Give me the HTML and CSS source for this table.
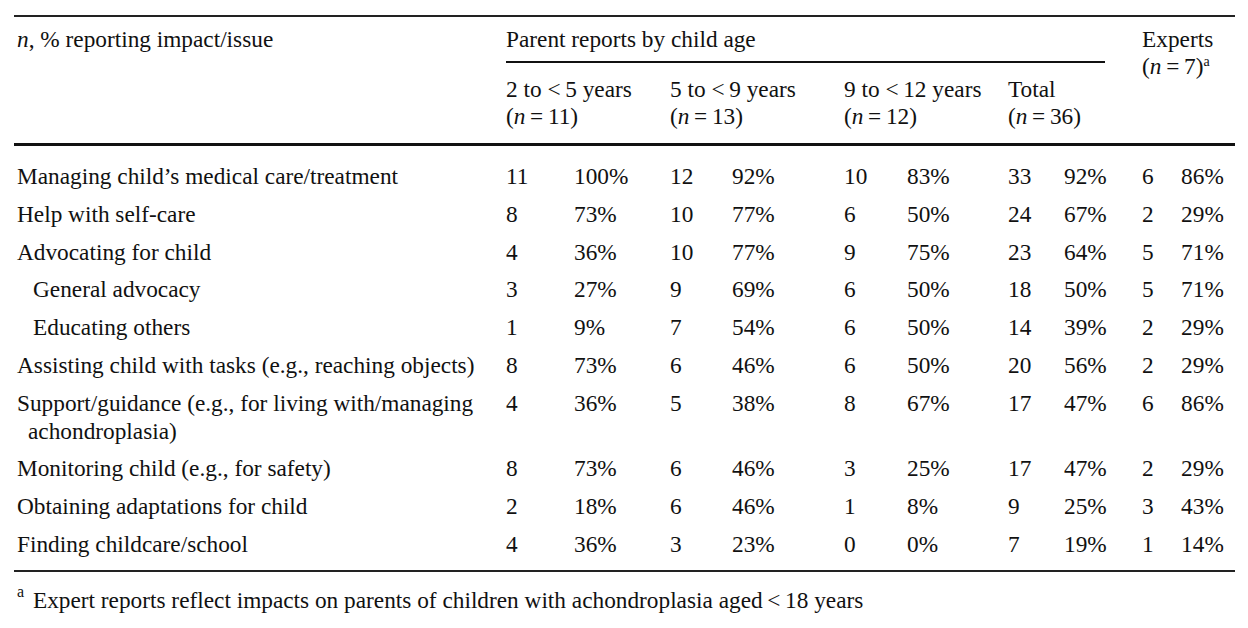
FILE: index.html
```html
<!DOCTYPE html>
<html lang="en">
<head>
<meta charset="utf-8">
<title>Table</title>
<link rel="stylesheet" href="styles.css">
</head>
<body>
<div class="page">
<table class="tbl">
  <colgroup>
    <col class="c-label">
    <col class="c-n1"><col class="c-p1">
    <col class="c-n2"><col class="c-p2">
    <col class="c-n3"><col class="c-p3">
    <col class="c-n4"><col class="c-p4">
    <col class="c-n5"><col class="c-p5">
  </colgroup>
  <thead>
    <tr class="h1">
      <th rowspan="2" class="lab"><i>n</i>, % reporting impact/issue</th>
      <th colspan="8" class="span"><div class="spanner">Parent reports by child age</div></th>
      <th colspan="2" rowspan="2" class="exp">Experts<br>(<i>n</i>&thinsp;=&thinsp;7)<sup>a</sup></th>
    </tr>
    <tr class="h2">
      <th colspan="2">2 to &lt;&thinsp;5 years<br>(<i>n</i>&thinsp;=&thinsp;11)</th>
      <th colspan="2">5 to &lt;&thinsp;9 years<br>(<i>n</i>&thinsp;=&thinsp;13)</th>
      <th colspan="2">9 to &lt;&thinsp;12 years<br>(<i>n</i>&thinsp;=&thinsp;12)</th>
      <th colspan="2">Total<br>(<i>n</i>&thinsp;=&thinsp;36)</th>
    </tr>
  </thead>
  <tbody>
    <tr class="first"><td class="lab">Managing child’s medical care/treatment</td><td>11</td><td>100%</td><td>12</td><td>92%</td><td>10</td><td>83%</td><td>33</td><td>92%</td><td>6</td><td>86%</td></tr>
    <tr><td class="lab">Help with self-care</td><td>8</td><td>73%</td><td>10</td><td>77%</td><td>6</td><td>50%</td><td>24</td><td>67%</td><td>2</td><td>29%</td></tr>
    <tr><td class="lab">Advocating for child</td><td>4</td><td>36%</td><td>10</td><td>77%</td><td>9</td><td>75%</td><td>23</td><td>64%</td><td>5</td><td>71%</td></tr>
    <tr><td class="lab sub">General advocacy</td><td>3</td><td>27%</td><td>9</td><td>69%</td><td>6</td><td>50%</td><td>18</td><td>50%</td><td>5</td><td>71%</td></tr>
    <tr><td class="lab sub">Educating others</td><td>1</td><td>9%</td><td>7</td><td>54%</td><td>6</td><td>50%</td><td>14</td><td>39%</td><td>2</td><td>29%</td></tr>
    <tr><td class="lab">Assisting child with tasks (e.g., reaching objects)</td><td>8</td><td>73%</td><td>6</td><td>46%</td><td>6</td><td>50%</td><td>20</td><td>56%</td><td>2</td><td>29%</td></tr>
    <tr><td class="lab hang">Support/guidance (e.g., for living with/managing achondroplasia)</td><td>4</td><td>36%</td><td>5</td><td>38%</td><td>8</td><td>67%</td><td>17</td><td>47%</td><td>6</td><td>86%</td></tr>
    <tr><td class="lab">Monitoring child (e.g., for safety)</td><td>8</td><td>73%</td><td>6</td><td>46%</td><td>3</td><td>25%</td><td>17</td><td>47%</td><td>2</td><td>29%</td></tr>
    <tr><td class="lab">Obtaining adaptations for child</td><td>2</td><td>18%</td><td>6</td><td>46%</td><td>1</td><td>8%</td><td>9</td><td>25%</td><td>3</td><td>43%</td></tr>
    <tr class="last"><td class="lab">Finding childcare/school</td><td>4</td><td>36%</td><td>3</td><td>23%</td><td>0</td><td>0%</td><td>7</td><td>19%</td><td>1</td><td>14%</td></tr>
  </tbody>
</table>
<p class="note"><sup>a</sup> Expert reports reflect impacts on parents of children with achondroplasia aged&thinsp;&lt;&thinsp;18 years</p>
</div>
</body>
</html>
```
FILE: styles.css
```css
html, body {
  margin: 0;
  padding: 0;
  background: #fff;
}
body {
  font-family: "Liberation Serif", "Times New Roman", serif;
  color: #111;
  font-size: 23.3px;
}
.page {
  padding: 15px 13px 0 14px;
}
.tbl {
  border-collapse: collapse;
  table-layout: fixed;
  width: 1221px;
  border-top: 2px solid #222;
  border-bottom: 2px solid #222;
}
.c-label { width: 489px; }
.c-n1 { width: 68px; }
.c-p1 { width: 96px; }
.c-n2 { width: 62px; }
.c-p2 { width: 112px; }
.c-n3 { width: 63px; }
.c-p3 { width: 101px; }
.c-n4 { width: 56px; }
.c-p4 { width: 78px; }
.c-n5 { width: 39px; }
.c-p5 { width: 57px; }

.tbl th, .tbl td {
  font-weight: normal;
  text-align: left;
  vertical-align: top;
  line-height: 28px;
  padding: 5px 0 4.75px 3px;
  white-space: nowrap;
}
.tbl thead th {
  line-height: 27px;
}
.tbl thead .h1 th {
  padding-top: 9px;
  padding-bottom: 0;
}
.tbl th.span {
  padding-right: 34px;
}
.spanner {
  border-bottom: 2px solid #111;
  padding-bottom: 8px;
}
.tbl thead .h2 th {
  padding-top: 13px;
  padding-bottom: 13px;
}
.tbl thead .h2 {
  border-bottom: 3px solid #111;
}
.tbl .exp sup {
  font-size: 0.6em;
  line-height: 0;
  vertical-align: 0.55em;
}
.tbl td.lab {
  white-space: normal;
}
.tbl td.sub {
  padding-left: 19px;
}
.tbl td.hang {
  padding-left: 14px;
  text-indent: -11px;
}
.tbl tr.first td {
  padding-top: 16px;
}
.tbl tr.last td {
  padding-bottom: 12px;
}
.note {
  margin: 0;
  padding: 14px 0 0 3px;
  line-height: 28px;
}
.note sup {
  font-size: 16px;
  line-height: 0;
  vertical-align: 11px;
  margin-right: 3px;
}
```
